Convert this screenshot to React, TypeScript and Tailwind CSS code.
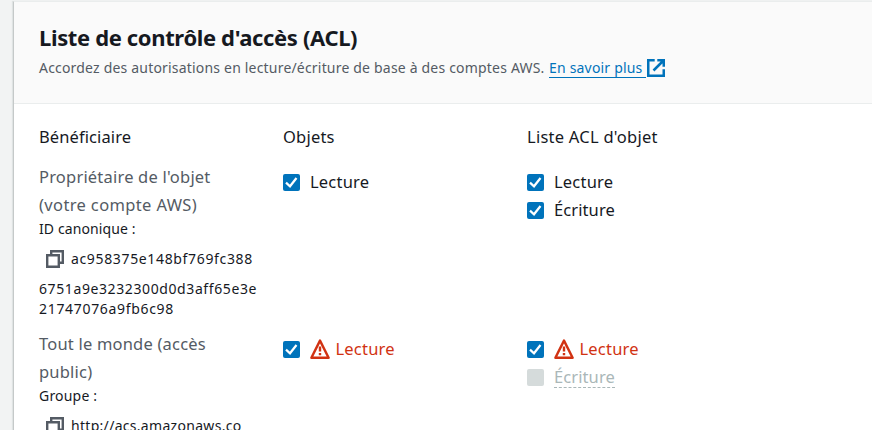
import type { ReactNode } from "react";

function Checkbox({ checked = true }: { checked?: boolean }) {
  if (!checked) {
    return <span className="block h-[17px] w-[17px] shrink-0 rounded-[2px] bg-[#d5dbdb]" />;
  }
  return (
    <span className="block h-[17px] w-[17px] shrink-0 rounded-[2px] bg-[#0073bb]">
      <svg viewBox="0 0 17 17" className="block h-[17px] w-[17px]" fill="none" stroke="#fff" strokeWidth="2.2">
        <path d="M3 8.6 7 12.3 13.5 4" />
      </svg>
    </span>
  );
}

function WarningIcon() {
  return (
    <svg viewBox="0 0 20 20" className="block h-5 w-5 shrink-0" fill="none" stroke="#d13212" strokeWidth="2.4">
      <path d="M10 1.6 18.6 18.8H1.4Z" strokeLinejoin="round" />
      <path d="M10 7.5v5M10 14v2.2" />
    </svg>
  );
}

function CopyIcon() {
  return (
    <svg viewBox="0 0 18 18" className="block h-[18px] w-[18px] shrink-0" fill="none" stroke="#545b64" strokeWidth="2.4">
      <path d="M1.2 5.2h11.6v11.6H1.2Z" />
      <path d="M5.2 5V1.2h11.6v11.6H13" />
    </svg>
  );
}

function ExternalIcon() {
  return (
    <svg viewBox="0 0 18 18" className="ml-px block h-[18px] w-[18px]" fill="none" stroke="#0073bb" strokeWidth="2.5">
      <path d="M7.7 1.25H1.25v15.5h15.5V10.3" />
      <path d="M10.3 1.25h6.45V7.7M16.75 1.25 6.5 11.5" />
    </svg>
  );
}

function Option({ children, checked }: { children: ReactNode; checked?: boolean }) {
  return (
    <div className="flex h-7 items-center gap-[10px]">
      <Checkbox checked={checked} />
      {children}
    </div>
  );
}

function Warned() {
  return (
    <span className="flex items-center gap-[5.5px] text-[#d13212]">
      <WarningIcon />
      <span>Lecture</span>
    </span>
  );
}

export default function App() {
  return (
    <div className="h-[430px] w-[872px] overflow-hidden bg-[#f2f3f3] pl-[13px] pt-px font-['Noto_Sans',sans-serif] text-[16.5px] leading-7 tracking-[0.2px] text-[#16191f]">
      <main className="h-[470px] w-[900px] border-l border-t border-l-[#c5c9c9] border-t-[#eaeded] bg-white shadow-[-1px_0_1px_#dfe3e3]">
        <header className="h-[102px] border-b border-[#eaeded] bg-[#fafafa] pl-[25px] pt-[21px]">
          <h2 className="whitespace-nowrap text-[22px] font-bold leading-7 tracking-[-0.36px]">Liste de contrôle d'accès (ACL)</h2>
          <div className="mt-[6px] flex h-[22px] items-center whitespace-nowrap text-[14px] leading-[22px] tracking-[0.19px] text-[#545b64]">
            <span className="w-[510px]">Accordez des autorisations en lecture/écriture de base à des comptes AWS.</span>
            <a className="flex items-center text-[#0073bb]">
              <span className="h-[19px] w-[97px] border-b border-[#0073bb] leading-[18px]">En savoir plus</span>
              <ExternalIcon />
            </a>
          </div>
        </header>
        <div className="grid grid-cols-[244px_244px_244px] pl-[25px] pt-[19px]">
          <div className="tracking-[0.1px]">Bénéficiaire</div>
          <div>Objets</div>
          <div className="tracking-[0.25px]">Liste ACL d'objet</div>
        </div>
        <section className="grid h-[167px] grid-cols-[244px_244px_244px] pl-[25px] pt-3">
          <div>
            <div className="text-[#545b64]">Propriétaire de l'objet<br /><span className="tracking-[0.36px]">(votre compte AWS)</span></div>
            <div className="text-[14px] leading-5 tracking-[0.1px]">ID canonique :</div>
            <div className="mt-[10px] flex h-5 items-center gap-[7px] pl-[7px] text-[14px] tracking-[0.65px]"><CopyIcon /><span>ac958375e148bf769fc388</span></div>
            <div className="mt-[10px] text-[14px] leading-5 tracking-[0.6px]">6751a9e3232300d0d3aff65e3e<br /><span className="tracking-[0.68px]">21747076a9fb6c98</span></div>
          </div>
          <div className="pt-[5px]"><Option>Lecture</Option></div>
          <div className="pt-[5px]"><Option>Lecture</Option><Option><span className="tracking-[0.1px]">Écriture</span></Option></div>
        </section>
        <section className="grid grid-cols-[244px_244px_244px] pl-[25px] pt-3">
          <div>
            <div className="text-[#545b64]">Tout le monde (accès<br />public)</div>
            <div className="text-[14px] leading-5">Groupe :</div>
            <div className="mt-[10px] flex h-5 items-center gap-[7px] pl-[7px] text-[14px] tracking-[0.3px]"><CopyIcon /><span>http://acs.amazonaws.co</span></div>
          </div>
          <div className="pt-[5px]"><Option><Warned /></Option></div>
          <div className="pt-[5px]">
            <Option><Warned /></Option>
            <Option checked={false}><span className="h-[22px] border-b border-dashed border-[#aab7b8] leading-[22px] tracking-[0.1px] text-[#aab7b8]">Écriture</span></Option>
          </div>
        </section>
      </main>
    </div>
  );
}
